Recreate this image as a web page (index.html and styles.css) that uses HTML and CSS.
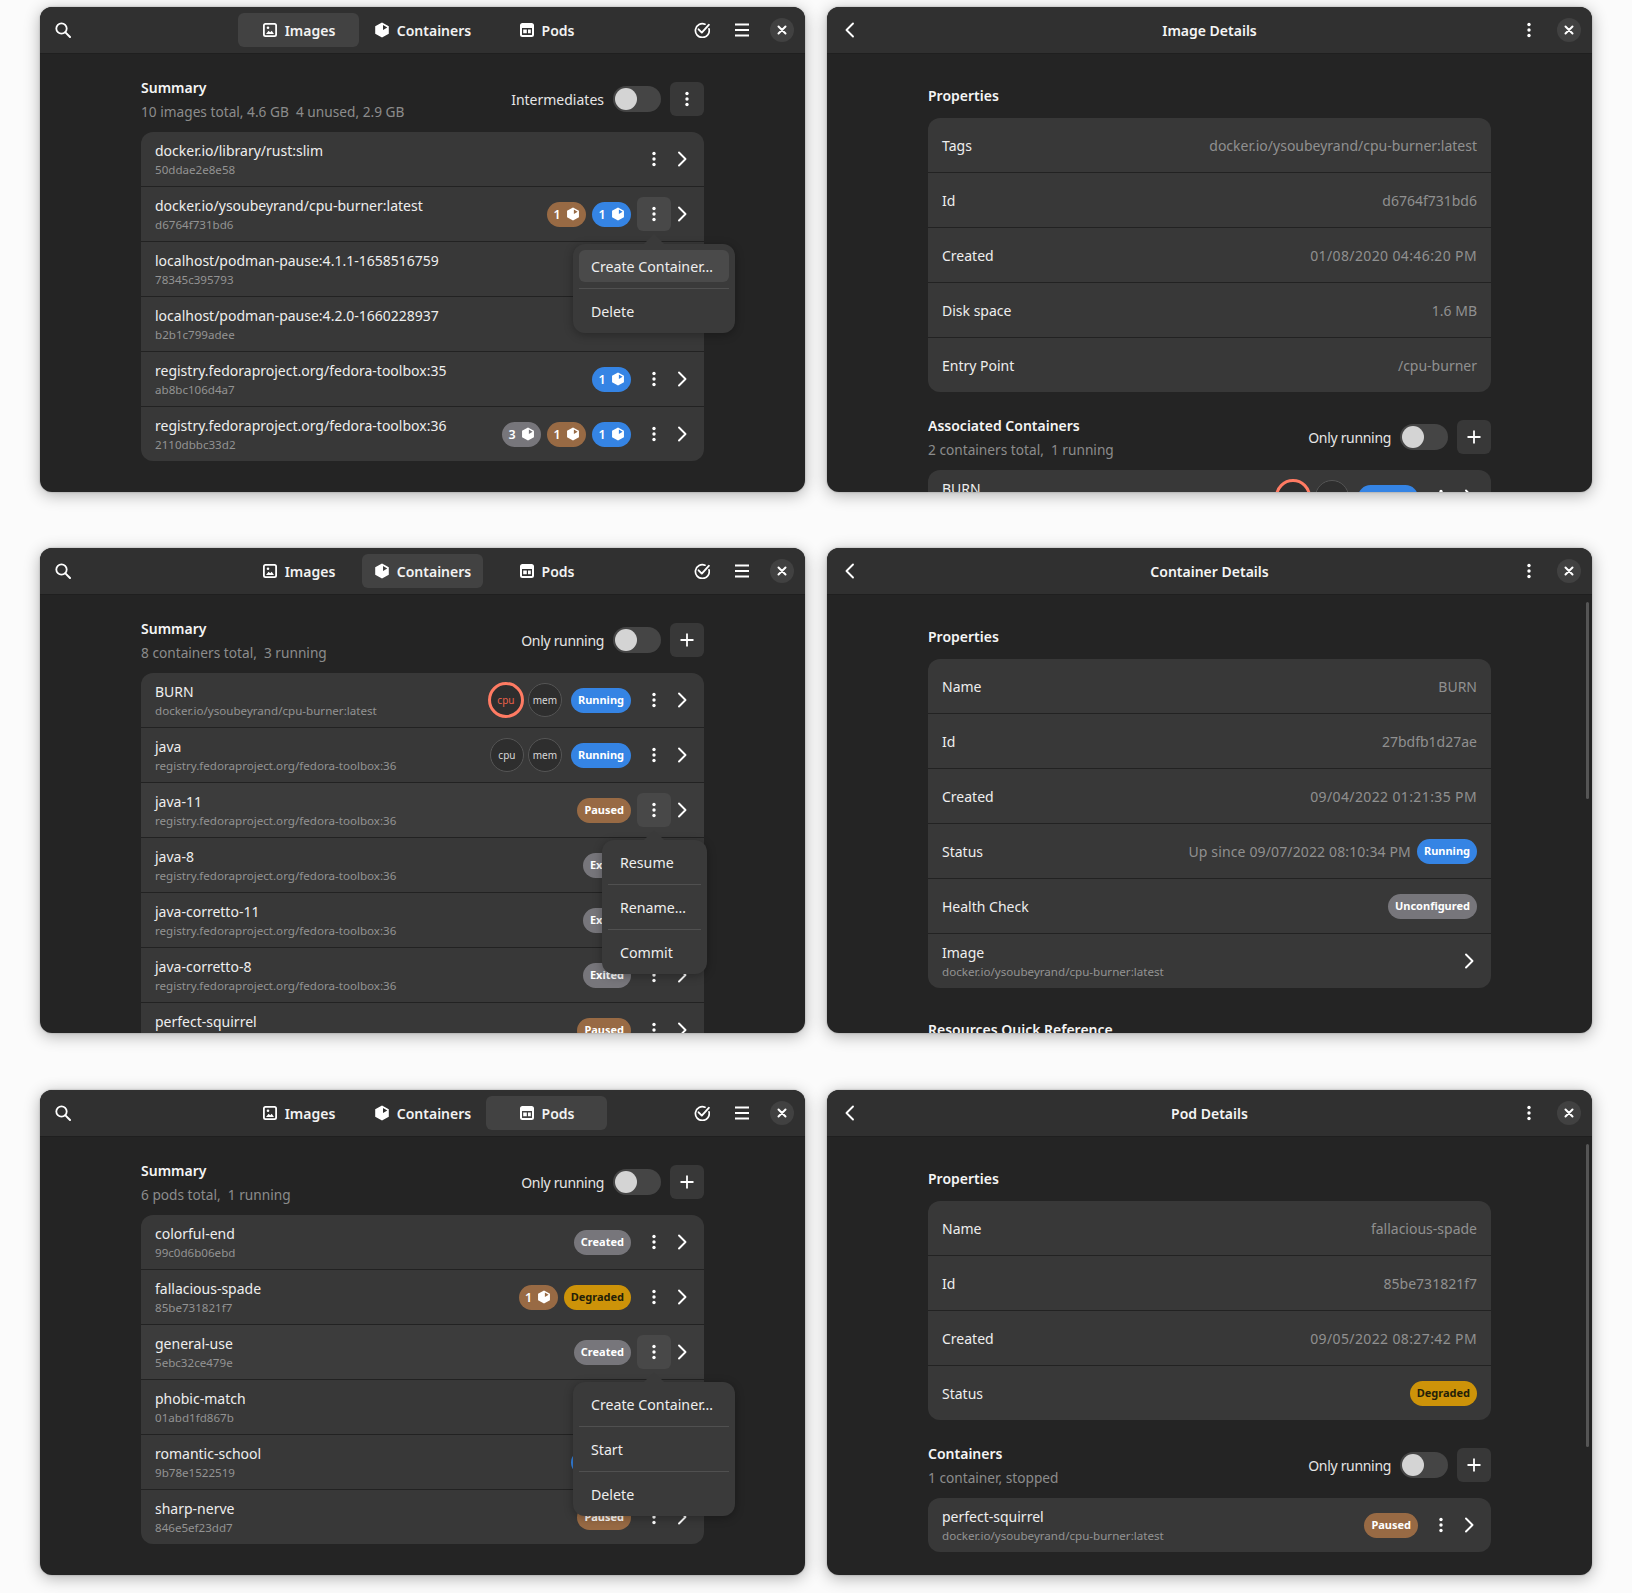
FILE: index.html
```html
<!DOCTYPE html>
<html lang="en">
<head>
<meta charset="utf-8">
<title>Pods</title>
<link rel="stylesheet" href="styles.css">
</head>
<body>
<svg class="defs" width="0" height="0" aria-hidden="true">
  <symbol id="i-search" viewBox="0 0 16 16"><circle cx="6.500" cy="6.500" r="5.200" fill="none" stroke="currentColor" stroke-width="1.800"/><path d="M10.400 10.400L15 15" fill="none" stroke="currentColor" stroke-width="2" stroke-linecap="round"/></symbol>
  <symbol id="i-image" viewBox="0 0 16 16"><path fill="currentColor" fill-rule="evenodd" d="M3.500 1h9A2.500 2.500 0 0 1 15 3.500v9a2.500 2.500 0 0 1-2.500 2.500h-9A2.500 2.500 0 0 1 1 12.500v-9A2.500 2.500 0 0 1 3.500 1zM3.500 2.800a.7.7 0 0 0-.7.700v9a.7.7 0 0 0 .7.700h9a.7.7 0 0 0 .7-.700v-9a.7.7 0 0 0-.7-.700z"/><path fill="currentColor" d="M4 12l2.600-3.200 1.600 1.500 1.500-1.600L12 12z"/><circle cx="6" cy="5.800" r="1.300" fill="currentColor"/></symbol>
  <symbol id="i-cube" viewBox="0 0 16 16"><path fill="currentColor" fill-rule="evenodd" d="M8 .5l6.800 3.700v7.600L8 15.500l-6.800-3.700V4.200zM9 2.900v5l4.300-2.500z"/></symbol>
  <symbol id="i-pod" viewBox="0 0 16 16"><path fill="currentColor" fill-rule="evenodd" d="M3.500 1h9A2.500 2.500 0 0 1 15 3.500v9a2.500 2.500 0 0 1-2.500 2.500h-9A2.500 2.500 0 0 1 1 12.500v-9A2.500 2.500 0 0 1 3.500 1zM3 6v6.500a.5.500 0 0 0 .5.500h9a.5.500 0 0 0 .5-.500V6zM4.200 7.500h3.600v3.800H4.200zM9 7.500h2.800v3.800H9z"/></symbol>
  <symbol id="i-check" viewBox="0 0 16 16"><path d="M15 6.800A6.900 6.900 0 1 1 11 2.200" fill="none" stroke="currentColor" stroke-width="1.700" stroke-linecap="round"/><path d="M4.600 7.300L7.800 10.600L14.800 2.800" fill="none" stroke="currentColor" stroke-width="1.900" stroke-linecap="round" stroke-linejoin="round"/></symbol>
  <symbol id="i-menu" viewBox="0 0 16 16"><path d="M1 2.500h14M1 8h14M1 13.500h14" fill="none" stroke="currentColor" stroke-width="1.800"/></symbol>
  <symbol id="i-close" viewBox="0 0 16 16"><path d="M4 4l8 8M12 4l-8 8" fill="none" stroke="currentColor" stroke-width="2.300" stroke-linecap="round"/></symbol>
  <symbol id="i-dots" viewBox="0 0 16 16"><circle cx="8" cy="2.500" r="1.700" fill="currentColor"/><circle cx="8" cy="8" r="1.700" fill="currentColor"/><circle cx="8" cy="13.500" r="1.700" fill="currentColor"/></symbol>
  <symbol id="i-next" viewBox="0 0 16 16"><path d="M5 1.500L11.500 8L5 14.500" fill="none" stroke="currentColor" stroke-width="1.900" stroke-linecap="round" stroke-linejoin="round"/></symbol>
  <symbol id="i-back" viewBox="0 0 16 16"><path d="M11 1.500L4.500 8L11 14.500" fill="none" stroke="currentColor" stroke-width="1.900" stroke-linecap="round" stroke-linejoin="round"/></symbol>
  <symbol id="i-plus" viewBox="0 0 16 16"><path d="M8 1.500v13M1.500 8h13" fill="none" stroke="currentColor" stroke-width="1.800"/></symbol>
</svg>

<main class="board">

<!-- Images -->
<section class="win">
  <header class="bar">
    <div class="bar-start"><svg class="ic"><use href="#i-search"/></svg></div>
    <nav class="tabs">
      <span class="tab on"><svg class="ic"><use href="#i-image"/></svg>Images</span>
      <span class="tab"><svg class="ic"><use href="#i-cube"/></svg>Containers</span>
      <span class="tab"><svg class="ic"><use href="#i-pod"/></svg>Pods</span>
    </nav>
    <div class="bar-end"><svg class="ic"><use href="#i-check"/></svg><svg class="ic"><use href="#i-menu"/></svg><span class="closer"><svg class="ic-s"><use href="#i-close"/></svg></span></div>
  </header>
  <div class="body list-body">
    <div class="head">
      <div class="head-text"><h2>Summary</h2><p class="sub">10 images total, 4.6 GB&nbsp; 4 unused, 2.9 GB</p></div>
      <div class="controls"><span>Intermediates</span><span class="switch"><i></i></span><span class="sq"><svg class="ic"><use href="#i-dots"/></svg></span></div>
    </div>
    <div class="group">
      <div class="row"><div class="txt"><b>docker.io/library/rust:slim</b><small>50ddae2e8e58</small></div><span class="more"><svg class="ic"><use href="#i-dots"/></svg></span><svg class="chev"><use href="#i-next"/></svg></div>
      <div class="row"><div class="txt"><b>docker.io/ysoubeyrand/cpu-burner:latest</b><small>d6764f731bd6</small></div><span class="pill brown">1<svg class="cube"><use href="#i-cube"/></svg></span><span class="pill blue">1<svg class="cube"><use href="#i-cube"/></svg></span><span class="more act"><svg class="ic"><use href="#i-dots"/></svg></span><svg class="chev"><use href="#i-next"/></svg></div>
      <div class="row"><div class="txt"><b>localhost/podman-pause:4.1.1-1658516759</b><small>78345c395793</small></div></div>
      <div class="row"><div class="txt"><b>localhost/podman-pause:4.2.0-1660228937</b><small>b2b1c799adee</small></div></div>
      <div class="row"><div class="txt"><b>registry.fedoraproject.org/fedora-toolbox:35</b><small>ab8bc106d4a7</small></div><span class="pill blue">1<svg class="cube"><use href="#i-cube"/></svg></span><span class="more"><svg class="ic"><use href="#i-dots"/></svg></span><svg class="chev"><use href="#i-next"/></svg></div>
      <div class="row"><div class="txt"><b>registry.fedoraproject.org/fedora-toolbox:36</b><small>2110dbbc33d2</small></div><span class="pill gray">3<svg class="cube"><use href="#i-cube"/></svg></span><span class="pill brown">1<svg class="cube"><use href="#i-cube"/></svg></span><span class="pill blue">1<svg class="cube"><use href="#i-cube"/></svg></span><span class="more"><svg class="ic"><use href="#i-dots"/></svg></span><svg class="chev"><use href="#i-next"/></svg></div>
    </div>
  </div>
  <div class="pop pop-wide pop-a">
    <span class="item sel">Create Container…</span><hr>
    <span class="item">Delete</span>
  </div>
</section>

<!-- Image details -->
<section class="win">
  <header class="bar">
    <div class="bar-start"><svg class="ic"><use href="#i-back"/></svg></div>
    <h1>Image Details</h1>
    <div class="bar-end"><svg class="ic"><use href="#i-dots"/></svg><span class="closer"><svg class="ic-s"><use href="#i-close"/></svg></span></div>
  </header>
  <div class="body">
    <h2 class="plain">Properties</h2>
    <div class="group">
      <div class="row prop"><span>Tags</span><em>docker.io/ysoubeyrand/cpu-burner:latest</em></div>
      <div class="row prop"><span>Id</span><em>d6764f731bd6</em></div>
      <div class="row prop"><span>Created</span><em class="date">01/08/2020 04:46:20 PM</em></div>
      <div class="row prop"><span>Disk space</span><em>1.6 MB</em></div>
      <div class="row prop"><span>Entry Point</span><em>/cpu-burner</em></div>
    </div>
    <div class="head next">
      <div class="head-text"><h2>Associated Containers</h2><p class="sub">2 containers total,&nbsp; 1 running</p></div>
      <div class="controls"><span class="tight">Only running</span><span class="switch"><i></i></span><span class="sq"><svg class="ic"><use href="#i-plus"/></svg></span></div>
    </div>
    <div class="group">
      <div class="row"><div class="txt"><b>BURN</b><small>docker.io/ysoubeyrand/cpu-burner:latest</small></div><span class="gauge hot">cpu</span><span class="gauge">mem</span><span class="pill blue state run">Running</span><span class="more"><svg class="ic"><use href="#i-dots"/></svg></span><svg class="chev"><use href="#i-next"/></svg></div>
    </div>
  </div>
</section>

<!-- Containers -->
<section class="win">
  <header class="bar">
    <div class="bar-start"><svg class="ic"><use href="#i-search"/></svg></div>
    <nav class="tabs">
      <span class="tab"><svg class="ic"><use href="#i-image"/></svg>Images</span>
      <span class="tab on"><svg class="ic"><use href="#i-cube"/></svg>Containers</span>
      <span class="tab"><svg class="ic"><use href="#i-pod"/></svg>Pods</span>
    </nav>
    <div class="bar-end"><svg class="ic"><use href="#i-check"/></svg><svg class="ic"><use href="#i-menu"/></svg><span class="closer"><svg class="ic-s"><use href="#i-close"/></svg></span></div>
  </header>
  <div class="body list-body">
    <div class="head">
      <div class="head-text"><h2>Summary</h2><p class="sub">8 containers total,&nbsp; 3 running</p></div>
      <div class="controls"><span class="tight">Only running</span><span class="switch"><i></i></span><span class="sq"><svg class="ic"><use href="#i-plus"/></svg></span></div>
    </div>
    <div class="group">
      <div class="row"><div class="txt"><b>BURN</b><small>docker.io/ysoubeyrand/cpu-burner:latest</small></div><span class="gauge hot">cpu</span><span class="gauge">mem</span><span class="pill blue state run">Running</span><span class="more"><svg class="ic"><use href="#i-dots"/></svg></span><svg class="chev"><use href="#i-next"/></svg></div>
      <div class="row"><div class="txt"><b>java</b><small>registry.fedoraproject.org/fedora-toolbox:36</small></div><span class="gauge">cpu</span><span class="gauge">mem</span><span class="pill blue state run">Running</span><span class="more"><svg class="ic"><use href="#i-dots"/></svg></span><svg class="chev"><use href="#i-next"/></svg></div>
      <div class="row lit"><div class="txt"><b>java-11</b><small>registry.fedoraproject.org/fedora-toolbox:36</small></div><span class="pill brown state">Paused</span><span class="more act"><svg class="ic"><use href="#i-dots"/></svg></span><svg class="chev"><use href="#i-next"/></svg></div>
      <div class="row"><div class="txt"><b>java-8</b><small>registry.fedoraproject.org/fedora-toolbox:36</small></div><span class="pill gray state">Exited</span><span class="more"><svg class="ic"><use href="#i-dots"/></svg></span><svg class="chev"><use href="#i-next"/></svg></div>
      <div class="row"><div class="txt"><b>java-corretto-11</b><small>registry.fedoraproject.org/fedora-toolbox:36</small></div><span class="pill gray state">Exited</span><span class="more"><svg class="ic"><use href="#i-dots"/></svg></span><svg class="chev"><use href="#i-next"/></svg></div>
      <div class="row"><div class="txt"><b>java-corretto-8</b><small>registry.fedoraproject.org/fedora-toolbox:36</small></div><span class="pill gray state">Exited</span><span class="more"><svg class="ic"><use href="#i-dots"/></svg></span><svg class="chev"><use href="#i-next"/></svg></div>
      <div class="row"><div class="txt"><b>perfect-squirrel</b><small>docker.io/ysoubeyrand/cpu-burner:latest</small></div><span class="pill brown state">Paused</span><span class="more"><svg class="ic"><use href="#i-dots"/></svg></span><svg class="chev"><use href="#i-next"/></svg></div>
    </div>
  </div>
  <div class="pop pop-narrow pop-b">
    <span class="item">Resume</span><hr>
    <span class="item">Rename…</span><hr>
    <span class="item">Commit</span>
  </div>
</section>

<!-- Container details -->
<section class="win">
  <header class="bar">
    <div class="bar-start"><svg class="ic"><use href="#i-back"/></svg></div>
    <h1>Container Details</h1>
    <div class="bar-end"><svg class="ic"><use href="#i-dots"/></svg><span class="closer"><svg class="ic-s"><use href="#i-close"/></svg></span></div>
  </header>
  <div class="body">
    <h2 class="plain">Properties</h2>
    <div class="group">
      <div class="row prop"><span>Name</span><em>BURN</em></div>
      <div class="row prop"><span>Id</span><em>27bdfb1d27ae</em></div>
      <div class="row prop"><span>Created</span><em class="date">09/04/2022 01:21:35 PM</em></div>
      <div class="row prop"><span>Status</span><em class="since">Up since 09/07/2022 08:10:34 PM</em><span class="pill blue state run">Running</span></div>
      <div class="row prop"><span>Health Check</span><span class="pill gray state end">Unconfigured</span></div>
      <div class="row prop"><div class="txt"><b>Image</b><small>docker.io/ysoubeyrand/cpu-burner:latest</small></div><svg class="chev only"><use href="#i-next"/></svg></div>
    </div>
    <h2 class="plain later">Resources Quick Reference</h2>
  </div>
  <span class="thumb thumb-b"></span>
</section>

<!-- Pods -->
<section class="win">
  <header class="bar">
    <div class="bar-start"><svg class="ic"><use href="#i-search"/></svg></div>
    <nav class="tabs">
      <span class="tab"><svg class="ic"><use href="#i-image"/></svg>Images</span>
      <span class="tab"><svg class="ic"><use href="#i-cube"/></svg>Containers</span>
      <span class="tab on"><svg class="ic"><use href="#i-pod"/></svg>Pods</span>
    </nav>
    <div class="bar-end"><svg class="ic"><use href="#i-check"/></svg><svg class="ic"><use href="#i-menu"/></svg><span class="closer"><svg class="ic-s"><use href="#i-close"/></svg></span></div>
  </header>
  <div class="body list-body">
    <div class="head">
      <div class="head-text"><h2>Summary</h2><p class="sub">6 pods total,&nbsp; 1 running</p></div>
      <div class="controls"><span class="tight">Only running</span><span class="switch"><i></i></span><span class="sq"><svg class="ic"><use href="#i-plus"/></svg></span></div>
    </div>
    <div class="group">
      <div class="row"><div class="txt"><b>colorful-end</b><small>99c0d6b06ebd</small></div><span class="pill gray state">Created</span><span class="more"><svg class="ic"><use href="#i-dots"/></svg></span><svg class="chev"><use href="#i-next"/></svg></div>
      <div class="row"><div class="txt"><b>fallacious-spade</b><small>85be731821f7</small></div><span class="pill brown">1<svg class="cube"><use href="#i-cube"/></svg></span><span class="pill yellow state">Degraded</span><span class="more"><svg class="ic"><use href="#i-dots"/></svg></span><svg class="chev"><use href="#i-next"/></svg></div>
      <div class="row lit"><div class="txt"><b>general-use</b><small>5ebc32ce479e</small></div><span class="pill gray state">Created</span><span class="more act"><svg class="ic"><use href="#i-dots"/></svg></span><svg class="chev"><use href="#i-next"/></svg></div>
      <div class="row"><div class="txt"><b>phobic-match</b><small>01abd1fd867b</small></div></div>
      <div class="row"><div class="txt"><b>romantic-school</b><small>9b78e1522519</small></div><span class="pill blue state run">Running</span><span class="more"><svg class="ic"><use href="#i-dots"/></svg></span><svg class="chev"><use href="#i-next"/></svg></div>
      <div class="row"><div class="txt"><b>sharp-nerve</b><small>846e5ef23dd7</small></div><span class="pill brown state">Paused</span><span class="more"><svg class="ic"><use href="#i-dots"/></svg></span><svg class="chev"><use href="#i-next"/></svg></div>
    </div>
  </div>
  <div class="pop pop-wide pop-c">
    <span class="item">Create Container…</span><hr>
    <span class="item">Start</span><hr>
    <span class="item">Delete</span>
  </div>
</section>

<!-- Pod details -->
<section class="win">
  <header class="bar">
    <div class="bar-start"><svg class="ic"><use href="#i-back"/></svg></div>
    <h1>Pod Details</h1>
    <div class="bar-end"><svg class="ic"><use href="#i-dots"/></svg><span class="closer"><svg class="ic-s"><use href="#i-close"/></svg></span></div>
  </header>
  <div class="body">
    <h2 class="plain">Properties</h2>
    <div class="group">
      <div class="row prop"><span>Name</span><em>fallacious-spade</em></div>
      <div class="row prop"><span>Id</span><em>85be731821f7</em></div>
      <div class="row prop"><span>Created</span><em class="date">09/05/2022 08:27:42 PM</em></div>
      <div class="row prop"><span>Status</span><span class="pill yellow state end">Degraded</span></div>
    </div>
    <div class="head next">
      <div class="head-text"><h2>Containers</h2><p class="sub">1 container, stopped</p></div>
      <div class="controls"><span class="tight">Only running</span><span class="switch"><i></i></span><span class="sq"><svg class="ic"><use href="#i-plus"/></svg></span></div>
    </div>
    <div class="group">
      <div class="row"><div class="txt"><b>perfect-squirrel</b><small>docker.io/ysoubeyrand/cpu-burner:latest</small></div><span class="pill brown state">Paused</span><span class="more"><svg class="ic"><use href="#i-dots"/></svg></span><svg class="chev"><use href="#i-next"/></svg></div>
    </div>
  </div>
  <span class="thumb thumb-c"></span>
</section>

</main>
</body>
</html>
```
FILE: styles.css
```css
* { box-sizing: border-box; }
html, body { margin: 0; height: 100%; }
body {
  background: #fbfbfb;
  font-family: "Noto Sans", "Open Sans", sans-serif;
  font-size: 14px;
  color: #f2f2f2;
  overflow: hidden;
}
.defs { position: absolute; }
.board {
  display: grid;
  grid-template-columns: 765px 765px;
  grid-auto-rows: 485px;
  column-gap: 22px;
  row-gap: 56px;
  padding: 7px 0 0 40px;
}
.win {
  position: relative;
  display: flex;
  flex-direction: column;
  height: 485px;
  background: #242424;
  border-radius: 12px;
  box-shadow: 0 3px 16px rgba(0,0,0,.3), 0 0 2px rgba(0,0,0,.3);
  overflow: hidden;
}
.win:nth-child(n+5) { margin-top: 1px; }
.bar {
  flex: none;
  display: grid;
  grid-template-columns: 1fr auto 1fr;
  align-items: center;
  height: 47px;
  padding: 0 11px;
  background: #303030;
  border-bottom: 1px solid #1f1f1f;
}
.bar h1 { margin: 0; font-size: 14px; font-weight: 600; color: #f5f5f5; }
.bar-start, .bar-end { display: flex; align-items: center; }
.bar-start { padding-left: 4px; }
.bar-end { justify-content: flex-end; gap: 24px; }
.ic { width: 16px; height: 16px; flex: none; color: #fff; }
.ic-s { width: 14px; height: 14px; color: #fff; }
.closer {
  display: flex; align-items: center; justify-content: center;
  width: 24px; height: 24px; margin-left: -4px;
  border-radius: 50%; background: #414141;
}
.tabs { display: flex; gap: 3px; }
.tab {
  display: flex; align-items: center; justify-content: center; gap: 7px;
  width: 121px; height: 34px;
  border-radius: 6px;
  font-weight: 600;
  font-size: 14px;
}
.tab.on { background: #424242; }

.body { flex: 1; min-height: 0; overflow: hidden; width: 563px; margin: 0 auto; }
.list-body { padding-top: 23px; }
h2 { margin: 0; font-size: 14px; font-weight: 600; line-height: 20px; color: #f5f5f5; }
.plain { padding-top: 32px; margin-bottom: 12px; }
.later { padding-top: 0; margin-top: 32px; }
.sub { margin: 4px 0 0; font-size: 13.7px; line-height: 20px; color: #8c8c8c; }
.head { display: flex; align-items: center; justify-content: space-between; height: 44px; margin-bottom: 11px; }
.head-text { padding-top: 2px; }
.head.next { margin-top: 23px; }
.controls { display: flex; align-items: center; gap: 9px; color: #e6e6e6; }
.tight { letter-spacing: -.32px; }
.switch {
  display: block; width: 48px; height: 26px; padding: 2px;
  border-radius: 13px; background: #454545;
}
.switch i { display: block; width: 22px; height: 22px; border-radius: 50%; background: #d4d4d4; }
.sq {
  display: flex; align-items: center; justify-content: center;
  width: 34px; height: 34px; border-radius: 6px; background: #383838;
}

.group { border-radius: 12px; background: #383838; overflow: hidden; }
.row {
  display: flex; align-items: center; gap: 6px;
  height: 55px;
  padding: 0 14px;
  border-bottom: 1px solid #222;
}
.row:last-child { height: 54px; border-bottom: 0; }
.row.lit { background: #3c3c3c; }
.txt { flex: 1; min-width: 0; display: flex; flex-direction: column; padding-top: 1px; }
.txt b { font-weight: 400; line-height: 19px; color: #eee; }
.txt small { font-size: 11.6px; line-height: 16px; margin-top: 2px; color: #939393; white-space: nowrap; }
.prop > span:first-child { flex: 1; color: #eee; }
.prop em { font-style: normal; color: #909090; }
.prop em.date { letter-spacing: .38px; }
.prop em.since { letter-spacing: .14px; }
.prop > span:first-child + em { flex: none; }
.prop em:last-child { margin-left: auto; }
.more {
  display: flex; align-items: center; justify-content: center;
  width: 34px; height: 34px; border-radius: 6px;
}
.more.act { background: #484848; }
.chev { width: 16px; height: 16px; color: #fff; margin-left: -3px; flex: none; }
.chev.only { margin-right: 0; }
.pill {
  display: inline-flex; align-items: center; justify-content: center; gap: 5px;
  height: 25px; width: 39px; border-radius: 13px;
  font-size: 12.5px; font-weight: 600; color: #fff; flex: none;
}
.state { width: auto; padding: 0 7px 1px; font-size: 11px; font-weight: 700; }
.end { margin-left: auto; }
.run { margin-left: 5px; }
.prop .run { margin-left: 0; }
.blue { background: #3584e4; }
.brown { background: #986a44; }
.gray { background: #77767b; }
.yellow { background: #cd9309; color: #241f08; }
.cube { width: 14px; height: 14px; color: #fff; }
.gauge {
  display: flex; align-items: center; justify-content: center;
  width: 34px; height: 34px; margin-right: -2px;
  border-radius: 50%; border: 1px solid #555; background: #2e2e2e;
  font-size: 10px; color: #d8d8d8;
}
.gauge.hot {
  width: 36px; height: 36px; margin-left: -1px; margin-right: -2px;
  border: 3px solid #ff7b63; color: #e8604a;
}

.pop {
  position: absolute;
  display: flex; flex-direction: column;
  padding: 6px;
  border-radius: 12px;
  background: #3a3a3a;
  box-shadow: 0 2px 10px rgba(0,0,0,.3);
  overflow: visible;
}
.pop::before {
  content: "";
  position: absolute; top: -10px;
  width: 0; height: 0;
  border-left: 10px solid transparent;
  border-right: 10px solid transparent;
  border-bottom: 10px solid #3a3a3a;
}
.pop hr { width: 100%; height: 1px; margin: 6px 0; border: 0; background: #505050; }
.item { display: flex; align-items: center; height: 32px; padding: 0 12px; border-radius: 6px; font-size: 14.2px; color: #eee; white-space: nowrap; }
.item.sel { background: #4a4a4a; }
.pop-wide { width: 162px; }
.pop-wide::before { left: 71px; }
.pop-narrow { width: 105px; }
.pop-narrow::before { left: 42px; }
.pop-a { left: 533px; top: 237px; }
.pop-b { left: 562px; top: 292px; }
.pop-c { left: 533px; top: 292px; }
.thumb { position: absolute; left: 759px; width: 3px; border-radius: 2px; background: #555; }
.thumb-b { top: 54px; height: 197px; }
.thumb-c { top: 54px; height: 303px; }
```
